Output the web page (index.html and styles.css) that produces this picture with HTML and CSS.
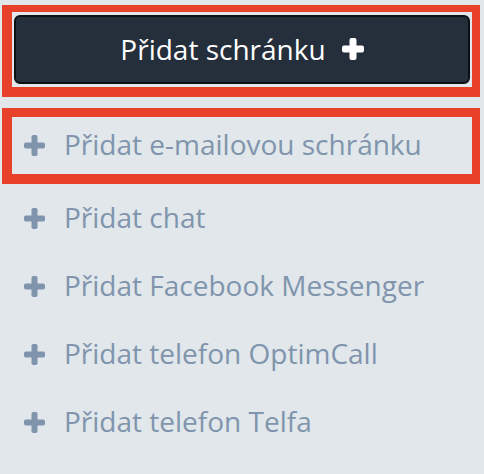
FILE: index.html
```html
<!DOCTYPE html>
<html lang="cs">
<head>
<meta charset="utf-8">
<title>Přidat schránku</title>
<link rel="stylesheet" href="styles.css">
</head>
<body>
<div class="panel">
  <div class="mark mark-top">
    <button class="add-btn" type="button">
      <span class="add-label">Přidat schránku</span>
      <svg class="add-plus" width="22" height="22" viewBox="0 0 22 22" aria-hidden="true">
        <rect x="0" y="7.5" width="22" height="7" rx="2"/>
        <rect x="7.5" y="0" width="7" height="22" rx="2"/>
      </svg>
    </button>
  </div>
  <ul class="menu">
    <li class="mark mark-item"><span class="item"><svg class="item-plus" width="21" height="21" viewBox="0 0 21 21" aria-hidden="true"><rect x="0" y="7.5" width="21" height="6" rx="1.8"/><rect x="7.5" y="0" width="6" height="21" rx="1.8"/></svg><span>Přidat e-mailovou schránku</span></span></li>
    <li class="row"><span class="item"><svg class="item-plus" width="21" height="21" viewBox="0 0 21 21" aria-hidden="true"><rect x="0" y="7.5" width="21" height="6" rx="1.8"/><rect x="7.5" y="0" width="6" height="21" rx="1.8"/></svg><span>Přidat chat</span></span></li>
    <li class="row"><span class="item"><svg class="item-plus" width="21" height="21" viewBox="0 0 21 21" aria-hidden="true"><rect x="0" y="7.5" width="21" height="6" rx="1.8"/><rect x="7.5" y="0" width="6" height="21" rx="1.8"/></svg><span>Přidat Facebook Messenger</span></span></li>
    <li class="row"><span class="item"><svg class="item-plus" width="21" height="21" viewBox="0 0 21 21" aria-hidden="true"><rect x="0" y="7.5" width="21" height="6" rx="1.8"/><rect x="7.5" y="0" width="6" height="21" rx="1.8"/></svg><span>Přidat telefon OptimCall</span></span></li>
    <li class="row"><span class="item"><svg class="item-plus" width="21" height="21" viewBox="0 0 21 21" aria-hidden="true"><rect x="0" y="7.5" width="21" height="6" rx="1.8"/><rect x="7.5" y="0" width="6" height="21" rx="1.8"/></svg><span>Přidat telefon Telfa</span></span></li>
  </ul>
</div>
</body>
</html>
```

FILE: styles.css
```css
html, body {
  margin: 0;
  padding: 0;
  background: #e1e7ea;
}

body {
  font-family: "Open Sans", "Noto Sans", "DejaVu Sans", sans-serif;
  width: 484px;
  height: 474px;
  overflow: hidden;
}

.panel {
  padding: 5px 4px 0 2px;
}

.mark {
  border-style: solid;
  border-color: #e8412a;
}

.mark-top {
  border-width: 7px 8px 10px 10px;
  padding: 3px 2px 3px 2px;
}

.add-btn {
  display: flex;
  align-items: center;
  justify-content: center;
  gap: 16px;
  width: 100%;
  height: 69px;
  margin: 0;
  padding: 0 0 2px 0;
  background: #252e3b;
  border: 2px solid #0c0f13;
  border-radius: 6px;
  color: #ffffff;
  font-family: inherit;
  font-size: 28px;
  cursor: pointer;
}

.add-plus {
  fill: #ffffff;
  display: block;
}

.menu {
  list-style: none;
  margin: 11px 0 0 0;
  padding: 0;
}

.mark-item {
  border-width: 9px 8px 10px 10px;
  height: 57px;
  display: flex;
  align-items: center;
  padding-left: 12px;
}

.row {
  height: 68px;
  display: flex;
  align-items: center;
  padding-left: 22px;
}

.item {
  display: flex;
  align-items: center;
  gap: 19px;
  color: #8095ad;
  font-size: 28px;
  line-height: 1;
}

.item > span {
  padding-bottom: 3px;
}

.item-plus {
  fill: #8095ad;
  display: block;
  flex: none;
}
```
